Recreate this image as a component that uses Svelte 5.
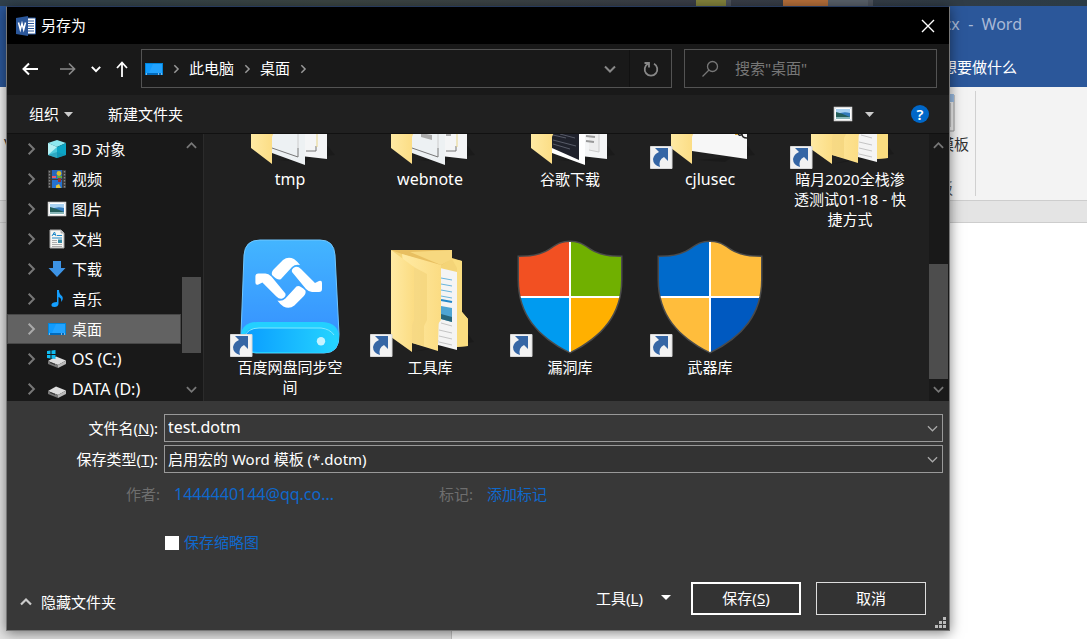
<script>
  const places = [
    { icon: 'cube', name: '3D 对象' },
    { icon: 'film', name: '视频' },
    { icon: 'picture', name: '图片' },
    { icon: 'doc', name: '文档' },
    { icon: 'down', name: '下载' },
    { icon: 'music', name: '音乐' },
    { icon: 'screen', name: '桌面' },
    { icon: 'osdrive', name: 'OS (C:)', latin: true },
    { icon: 'drive', name: 'DATA (D:)', latin: true }
  ];
  const files = [
    { icon: 'papers', name: 'tmp', latin: true },
    { icon: 'notes', name: 'webnote', latin: true },
    { icon: 'dark', name: '谷歌下载' },
    { icon: 'single', name: 'cjlusec', link: true, latin: true },
    { icon: 'folder', name: '暗月2020全栈渗透测试01-18 - 快捷方式', link: true },
    { icon: 'disk', name: '百度网盘同步空间', link: true },
    { icon: 'folder', name: '工具库', link: true },
    { icon: 'shield', name: '漏洞库', link: true, colors: ['#f25022', '#70b000', '#009bf0', '#ffb000'] },
    { icon: 'shield', name: '武器库', link: true, colors: ['#006acb', '#ffbd3c', '#ffbd3c', '#0059c0'] }
  ];
  let selected = $state('桌面');
  let filename = $state('test.dotm');
  let thumbnail = $state(false);
</script>

{#snippet chevron(dir, size, color, width)}
  <svg class="chev" width={size} height={size} viewBox="0 0 12 12" fill="none" stroke={color} stroke-width={width}>
    {#if dir === 'right'}<path d="M4 1.5 8.5 6 4 10.5" />
    {:else if dir === 'down'}<path d="M1 3.5 6 8.5 11 3.5" />
    {:else}<path d="M1 8.5 6 3.5 11 8.5" />{/if}
  </svg>
{/snippet}

{#snippet triangle(color, width)}
  <svg {width} height="5" viewBox="0 0 10 5" preserveAspectRatio="none"><path d="M0 0H10L5 5Z" fill={color} /></svg>
{/snippet}

{#snippet smallIcon(kind)}
  <svg width="20" height="20" viewBox="0 0 20 20">
    {#if kind === 'cube'}
      <path d="M10 1 19 4 10 8 1 4Z" fill="#8de8f0" /><path d="M1 4 10 8V19L1 16Z" fill="#4cc9dc" />
      <path d="M19 4 10 8V19L19 16Z" fill="#0ba4c4" /><path d="M1 4 10 8 1 16Z" fill="#b5f1f4" /><path d="M10 13 19 16 10 19 1 16Z" fill="#168eaf" opacity=".55" />
    {:else if kind === 'film'}
      <path d="M1 1H19V19H1Z" fill="#3c3c3c" /><path d="M2.500 2V19M17.500 2V19" stroke="#858585" stroke-width="1.400" stroke-dasharray="1.5 1.5" />
      <path d="M5 1H15V10H5Z" fill="#2867bd" /><path d="M5 11H15V19H5Z" fill="#2672ce" />
      <path d="M5 7H9V9H5Z" fill="#ef5864" /><circle cx="12" cy="4.500" r="2.400" fill="#d9bb2a" /><path d="M10 7H15V9H10Z" fill="#5eac3f" /><path d="M11 9H14V13H11Z" fill="#9e3131" /><path d="M9 19V16.500L12 15 14 19Z" fill="#e4c43a" />
    {:else if kind === 'picture'}
      <path d="M1.500 3.500H18.500V16.500H1.500Z" fill="#347bbd" stroke="#ddd" stroke-width="1.500" /><path d="M3 5H17V9Q9 7 3 11Z" fill="#a9d2f2" /><path d="M3 8Q8 9 17 13V15H3Z" fill="#245f5b" /><path d="M3 13 17 13V15H3Z" fill="#8bb8ba" /><path d="M2.500 4.500H17.500V15.500H2.500Z" stroke="white" fill="none" />
    {:else if kind === 'doc'}
      <path d="M3 1H14L17 4V19H3Z" fill="#f5f5f2" stroke="#aaa" /><path d="M14 1V4H17" fill="#ccc" stroke="#888" stroke-width=".6" />
      <path d="M5 7 7.500 3 9 7M6 5.500H8.500M10 6.500H15M5 9H15" fill="none" stroke="#2089c9" /><path d="M5 11.500H10M5 13.500H10M5 15.500H15M5 17.500H15" stroke="#999" stroke-width=".8" /><path d="M11 10.500H15V14H11Z" fill="#388ba6" />
    {:else if kind === 'down'}
      <path d="M6 2H14V9H18.500L10 18 1.500 9H6Z" fill="#3d94e6" />
    {:else if kind === 'music'}
      <path d="M10 1H12Q12 5 15 7Q17 10 14 13Q15 9 11.500 8V15Q11 18 7.500 18Q4 18 4.500 15.500Q5 13 10 13Z" fill="#149fff" />
    {:else if kind === 'screen'}
      <path d="M1 4H19V16H1Z" fill="#0086dc" /><path d="M2 5H18V14H2Z" fill="#119cff" /><path d="M9 5H18V14H5Z" fill="#35aaff" opacity=".5" /><path d="M2 15H18" stroke="#024f9c" /><path d="M2 15H3M14 15H15M17 15H18" stroke="white" />
    {:else}
      <path d="M1 12 9 7.500 19 11.500 11 16Z" fill="#dedede" /><path d="M1 12 11 16V19L1 15Z" fill="#777" /><path d="M11 16 19 11.500V15L11 19Z" fill="#b8b8b8" /><path d="M3 13.500 8 15.500" stroke="#333" />
      {#if kind === 'osdrive'}<path d="M0 2 3.500 1.500V5H0ZM4.500 1.400 8.500 1V5H4.500ZM0 6H3.500V9.500L0 9ZM4.500 6H8.500V10L4.500 9.600Z" fill="#10bcf2" />{/if}
    {/if}
  </svg>
{/snippet}

{#snippet bigIcon(f)}
  <svg class="big" width="120" height="120" viewBox="0 0 120 120">
    <defs>
      <linearGradient id="flap" x2="1"><stop stop-color="#ffeaa3" /><stop offset="1" stop-color="#fbdc83" /></linearGradient>
      <linearGradient id="disk" x2="0" y2="1"><stop stop-color="#43b5ff" /><stop offset="1" stop-color="#348cff" /></linearGradient>
      <linearGradient id="base" x2="1"><stop stop-color="#0a9cff" /><stop offset="1" stop-color="#25d4ff" /></linearGradient>
      <clipPath id="shield"><path d="M60 4C48 4 44 10 36 14C28 18 18 19 9 19V42C9 76 28 98 60 114C92 98 111 76 111 42V19C102 19 92 18 84 14C76 10 72 4 60 4Z" /></clipPath>
    </defs>
    {#if f.icon === 'folder'}
      <path d="M42 114 104 104 98 96 68 108Z" fill="#111" opacity=".35" />
      <path d="M21 12H82V20L92 23V74L98 81V108L84 109 40 90Z" fill="#f4d477" /><path d="M21 12H82V20L70 28 32 16Z" fill="#e8bf61" />
      <path d="M40 14 82 12V21L71 27Z" fill="#f7d87f" />
      <path d="M82 21 92 23V74L98 81V108L87 109V30Z" fill="#fadd80" />
      <path d="M70 30 87 34V112L68 107Z" fill="#f4f4f4" /><path d="M71 40 82 42M71 46 82 48M71 52 82 54M71 58 82 60" stroke="#69b5dc" />
      <path d="M71 62 82 64" stroke="#2488c8" stroke-width="2" /><path d="M71 68 82 70V84L71 81Z" fill="#4da5d3" /><path d="M71 76 82 79V84L71 81Z" fill="#27677c" />
      <path d="M71 85 82 88M69 92 82 95M69 98 82 101M69 104 82 107" stroke="#c4c4c4" />
      <path d="M32 16 71 27V82L68 86V113L42 105Z" fill="url(#flap)" /><path d="M42 28 57 36V82L54 88V108L42 105Z" fill="#f2d37a" opacity=".65" />
      <path d="M21 12 44 29V82L42 87V114L21 99Z" fill="url(#flap)" />
    {:else if f.icon === 'disk'}
      <path d="M30 2H90Q104 2 105 17L109 96Q110 115 94 115H26Q10 115 11 96L14 17Q15 2 30 2Z" fill="url(#disk)" stroke="#70c7ff" />
      <path d="M11 97Q12 84 28 84H93Q108 85 109 98Q109 115 94 115H26Q11 114 11 97Z" fill="#23d0ff" />
      <path d="M13 100Q16 90 29 90H91Q105 91 107 101Q107 114 93 114H27Q14 113 13 100Z" fill="url(#base)" /><path d="M14 99Q18 90 29 90H91Q100 91 104 97" fill="none" stroke="#81e7ff" />
      <circle cx="91" cy="103.300" r="4.200" fill="#c5f3ff" />
      {#each [0, 180] as turn}
        <g transform={`rotate(${turn} 58.7 44.7)`} fill="white">
          <path d="M42 37Q41 34 44 31L53 22Q58 18 64 21Q68 24 70 27Q65 26 62 29L51 41Q48 43 42 37Z" />
          <path d="M62 34Q61 31 65 29Q68 28 71 31L85 45 89 43Q92 42 92 45V51Q92 54 89 54H82Q79 54 76 51Z" />
        </g>
      {/each}
    {:else if f.icon === 'shield'}
      <path d="M60 4C48 4 44 10 36 14C28 18 18 19 9 19V42C9 76 28 98 60 114C92 98 111 76 111 42V19C102 19 92 18 84 14C76 10 72 4 60 4Z" stroke="#4b4b4b" stroke-width="3" />
      <g clip-path="url(#shield)">
        <path d="M0 0H60V59H0Z" fill={f.colors[0]} /><path d="M60 0H120V59H60Z" fill={f.colors[1]} />
        <path d="M0 59H60V120H0Z" fill={f.colors[2]} /><path d="M60 59H120V120H60Z" fill={f.colors[3]} />
        <path d="M60 0V120M0 59H120" stroke="white" stroke-width="2" />
      </g>
    {:else}
      <path d="M48 110 105 105 98 96 75 112Z" fill="#111" opacity=".35" />
      {#if f.icon === 'single'}
        <path d="M42 20H97V109L42 101Z" fill="#f7f7f7" /><path d="M88 83Q89 87 92 84Q92 88 97 88" fill="none" stroke="#222" stroke-width="1.500" /><path d="M85 84.500H88" stroke="#d4a53b" />
      {:else}
        <path d="M62 20H97V109L62 105Z" fill="#f4f5f6" />
        <path d="M42 20H75V115L42 103Z" fill={f.icon === 'dark' ? '#fff' : '#edf1f3'} />
        {#if f.icon === 'dark'}
          <path d="M42 20H69V110L42 98Z" fill="#20222c" /><path d="M43 85 56 88M43 90 66 96M43 94 60 99M50 84 65 88" stroke="#666977" stroke-width=".8" />
          <path d="M79 20H89V102L79 100" fill="#eee" stroke="#ccc" /><path d="M76 86 85 87M76 91 84 92" stroke="#999" stroke-width="2" />
        {:else}
          <path d="M42 98 68 107V98M76 101H86V96" fill="none" stroke="#777" /><path d="M68 84V98" stroke="#ccc" /><path d="M87 84V97" stroke="#e8d487" />
          {#if f.icon === 'notes'}<path d="M51 83 62 85V90L51 87Z" fill="#aaa" /><path d="M76 83H81V86H76Z" fill="#aaa" />{/if}
        {/if}
      {/if}
      <path d="M21 12 44 29V82L42 87V114L21 98Z" fill="url(#flap)" />
    {/if}
    {#if f.link}
      <path d="M.500 96.500H22V118.500H.500Z" fill="#f2f2f2" stroke="#d8d8d8" />
      <path d="M5 98H18V111L14 107Q8 110 10 117Q3 115 3 109Q4 104 9 102Z" fill="#3566a5" />
    {/if}
  </svg>
{/snippet}

<div class="desktop">
  <div class="word">
    <div class="strip"><i class="olive"></i><i class="slate"></i><i class="orange"></i><i class="gray"></i><i class="slate"></i></div>
    <div class="wordtitle">cx&nbsp; -&nbsp; Word</div>
    <div class="tabs">想要做什么</div>
    <div class="ribbon">
      <div class="sliver">V</div>
      <div class="group">
        <svg width="26" height="38" viewBox="0 0 26 38"><path d="M1 1H25V37H1Z" fill="#f5f5f5" stroke="#999" /><path d="M1 0H25V8H1Z" fill="#9dbfe6" /><path d="M5 9H21V33H5Z" fill="#fff" stroke="#999" /></svg>
        <span class="cmd">模板</span>
        <span class="grp">板</span>
      </div>
    </div>
    <div class="ruler"></div>
    <div class="canvas"><div class="sheet"></div></div>
  </div>

  <main class="dialog">
    <header>
      <svg width="20" height="20" viewBox="0 0 20 20"><path d="M10 2H19.500V18H10Z" fill="white" stroke="#2b579a" /><path d="M12 5H18M12 7.500H18M12 10H18M12 12.500H18M12 15H18" stroke="#2b579a" /><path d="M0 2 12 0V20L0 18Z" fill="#2b579a" /><path d="M2.500 6.500 4.300 13.500 6 7.500 7.700 13.500 9.500 6.500" fill="none" stroke="white" stroke-width="1.500" /></svg>
      <h1>另存为</h1>
      <button class="close" aria-label="关闭"><svg width="14" height="14" viewBox="0 0 14 14"><path d="M1 1 13 13M13 1 1 13" stroke="white" stroke-width="1.400" /></svg></button>
    </header>

    <nav class="address">
      <div class="arrows">
        <button aria-label="后退"><svg width="16" height="14" viewBox="0 0 16 14" fill="none" stroke="white" stroke-width="2"><path d="M16 7H2M7 1.500 1.500 7 7 12.500" /></svg></button>
        <button class="forward" aria-label="前进"><svg width="16" height="14" viewBox="0 0 16 14" fill="none" stroke="#888" stroke-width="1.700"><path d="M0 7H14M9 1.500 14.500 7 9 12.500" /></svg></button>
        <button aria-label="最近">{@render chevron('down', 10, '#fff', 2.4)}</button>
        <button aria-label="向上"><svg width="12" height="16" viewBox="0 0 12 16" fill="none" stroke="white" stroke-width="1.800"><path d="M6 16V2M1 7 6 1.500 11 7" /></svg></button>
      </div>
      <div class="path">
        {@render smallIcon('screen')}
        {@render chevron('right', 10, '#999', 1.8)}
        <button class="crumb">此电脑</button>
        {@render chevron('right', 10, '#999', 1.8)}
        <button class="crumb">桌面</button>
        {@render chevron('right', 10, '#999', 1.8)}
        <button class="drop" aria-label="历史">{@render chevron('down', 12, '#888', 2)}</button>
        <button class="refresh" aria-label="刷新"><svg width="16" height="16" viewBox="0 0 16 16" fill="none" stroke="#888" stroke-width="1.800"><path d="M11 2.800A6.300 6.300 0 1 1 5 2.800M1.500 2H6V6.500" /></svg></button>
      </div>
      <div class="search">
        <svg width="18" height="18" viewBox="0 0 18 18" fill="none" stroke="#777" stroke-width="1.300"><circle cx="11.500" cy="6.500" r="5" /><path d="M8 10 1.500 16.500" /></svg>
        <input type="search" aria-label="搜索" placeholder={'搜索"桌面"'} />
      </div>
    </nav>

    <div class="toolbar">
      <button>组织 {@render triangle('#ccc', 9)}</button>
      <button>新建文件夹</button>
      <span class="fill"></span>
      <button class="view" aria-label="视图">{@render smallIcon('picture')}{@render triangle('#ccc', 9)}</button>
      <button class="help" aria-label="帮助">?</button>
    </div>

    <div class="browser">
      <ul class="tree">
        {#each places as p}
          <li><button class:on={selected === p.name} onclick={() => (selected = p.name)}>
            {@render chevron('right', 14, selected === p.name ? '#aaa' : '#777', 1.7)}
            {@render smallIcon(p.icon)}<span class:latin={p.latin}>{p.name}</span>
          </button></li>
        {/each}
      </ul>
      <div class="scroll tree-scroll">{@render chevron('up', 11, '#777', 2)}<i></i>{@render chevron('down', 11, '#777', 2)}</div>
      <div class="files">
        <div class="grid">
          {#each files as f}
            <div class="file">{@render bigIcon(f)}<span class:latin={f.latin}>{f.name}</span></div>
          {/each}
        </div>
      </div>
      <div class="scroll file-scroll">{@render chevron('up', 11, '#777', 2)}<i></i>{@render chevron('down', 11, '#777', 2)}</div>
    </div>

    <section class="form">
      <div class="field">
        <label for="fname">文件名(<u>N</u>):</label>
        <div class="combo"><input id="fname" bind:value={filename} />{@render chevron('down', 11, '#aaa', 1.3)}</div>
      </div>
      <div class="field">
        <label for="ftype">保存类型(<u>T</u>):</label>
        <div class="combo shade"><select id="ftype"><option>启用宏的 Word 模板 (*.dotm)</option></select>{@render chevron('down', 11, '#aaa', 1.3)}</div>
      </div>
      <div class="meta">
        <span class="key">作者:</span><button class="link author">1444440144@qq.co...</button>
        <span class="tag">标记:</span><button class="link">添加标记</button>
      </div>
      <label class="thumb"><input type="checkbox" bind:checked={thumbnail} /><span>保存缩略图</span></label>
      <footer>
        <button class="hide">{@render chevron('up', 12, '#ccc', 2.2)}隐藏文件夹</button>
        <span class="fill"></span>
        <button class="tools"><span>工具(<u>L</u>)</span>{@render triangle('#fff', 10)}</button>
        <button class="push save"><span>保存(<u>S</u>)</span></button>
        <button class="push">取消</button>
      </footer>
    </section>
    <svg class="grip" width="11" height="11" viewBox="0 0 11 11" fill="#bbb"><path d="M8 0H11V3H8ZM4 4H7V7H4ZM8 4H11V7H8ZM0 8H3V11H0ZM4 8H7V11H4ZM8 8H11V11H8Z" /></svg>
  </main>
</div>

<style>
  :global(body) { overflow: hidden; background: #fff; }
  * { box-sizing: border-box; }
  .desktop { position: relative; min-height: 100vh; font: 15px/20px "Noto Sans", "Noto Sans CJK SC", sans-serif; color: #fff; overflow: hidden; }
  button, input, select { font: inherit; color: inherit; background: none; border: 0; padding: 0; margin: 0; border-radius: 0; }
  svg { flex: none; display: block; }
  button { white-space: nowrap; }

  .word { position: absolute; inset: 0; display: flex; flex-direction: column; }
  .strip { height: 6px; flex: none; display: flex; justify-content: flex-end; padding-right: 214px; background: linear-gradient(90deg, #30404c, #3c4643 30%, #3a3e48 65%, #2b3b45); }
  .strip i { width: 40px; background: #59616a; }
  .strip .olive { width: 30px; background: #83833c; }
  .strip .slate { width: 5px; background: #4e545d; }
  .strip .orange { width: 45px; margin-left: 52px; background: #b66f3a; }
  .wordtitle { flex: none; height: 38px; padding-right: 65px; background: #2b579a; color: #a9bad7; font-size: 16px; line-height: 36px; text-align: right; }
  .tabs { flex: none; height: 43px; padding-right: 70px; background: #2b579a; line-height: 46px; text-align: right; }
  .ribbon { flex: none; height: 113px; display: flex; justify-content: space-between; padding: 4px 111px 4px 4px; background: #f3f3f3; color: #333; }
  .sliver { padding-top: 42px; }
  .group { width: 130px; display: flex; flex-direction: column; align-items: flex-end; padding: 3px 6px 0 0; border-right: 1px solid #d0d0d0; }
  .group svg { margin-right: 14px; }
  .cmd { padding-top: 2px; }
  .grp { padding: 24px 16px 0 0; color: #555; }
  .ruler { flex: none; height: 23px; background: #e4e4e4; border: solid #cdcdcd; border-width: 1px 0; }
  .canvas { flex: 1; display: flex; padding-left: 451px; background: #e4e4e4; }
  .sheet { flex: 1; background: #fff; border-left: 1px solid #c6c6c6; }

  .dialog { position: relative; margin: 6px 137px 8px 6px; min-height: calc(100vh - 14px); display: flex; flex-direction: column; background: #383838; border: 1px solid #777; border-top-color: #26395b; box-shadow: 0 2px 12px rgb(0 0 0 / 50%); }
  header { height: 37px; display: flex; align-items: center; gap: 5px; padding: 0 14px 0 9px; background: #000; }
  h1 { flex: 1; margin: 0; padding-bottom: 2px; font-size: 15px; font-weight: 400; }
  .address { height: 51px; display: flex; align-items: center; gap: 10px; padding: 0 12px 2px 15px; background: #191919; }
  .arrows { width: 109px; display: flex; align-items: center; gap: 15px; }
  .forward { margin-left: 7px; }
  .path { flex: 1; height: 39px; display: flex; align-items: center; gap: 8px; padding-left: 2px; border: 1px solid #535353; }
  .path svg + :global(svg) { margin-left: -1px; }
  .crumb { padding-bottom: 2px; }
  .drop { margin-left: auto; padding-right: 5px; }
  .refresh { height: 37px; width: 42px; display: flex; justify-content: center; align-items: center; border-left: 1px solid #111; }
  .search { width: 253px; height: 39px; display: flex; align-items: center; gap: 16px; margin-left: 2px; padding: 0 16px; border: 1px solid #535353; }
  .search input { min-width: 0; flex: 1; padding-bottom: 2px; outline: 0; }
  .search input::placeholder { color: #777; opacity: 1; }
  .toolbar { height: 38px; display: flex; align-items: center; padding: 0 20px 0 22px; gap: 35px; background: #202020; }
  .toolbar button { display: flex; align-items: center; gap: 5px; }
  .fill { flex: 1; }
  .toolbar .view { gap: 12px; margin-right: 2px; }
  .toolbar .help { width: 18px; height: 18px; justify-content: center; border-radius: 50%; background: #0067c8; font-weight: 600; }

  .browser { flex: none; height: 268px; display: flex; border-top: 1px solid #111; background: #202020; overflow: hidden; }
  .tree { flex: none; width: 174px; margin: 0; padding: 0; list-style: none; background: #191919; }
  .tree button { width: 100%; height: 30px; display: flex; align-items: center; padding-left: 16px; border: 1px solid transparent; }
  .tree .on { background: #626262; border-color: #474747; }
  .tree svg + :global(svg) { margin-left: 9px; }
  .tree span { margin-left: 5px; }
  .latin { font-size: 16px; }
  .scroll { flex: none; display: flex; flex-direction: column; align-items: center; padding: 6px 1px 6px 0; background: #191919; }
  .scroll i { width: 19px; background: #4d4d4d; }
  .tree-scroll i { height: 76px; margin: 126px 0 auto; }
  .file-scroll i { height: 115px; margin: 113px 0 auto; }
  .tree-scroll { width: 22px; }
  .file-scroll { width: 20px; }
  .files { flex: 1; display: flex; align-items: flex-end; padding: 0 0 4px 16px; border-left: 1px solid #2b2b2b; overflow: hidden; }
  .grid { flex: 1; display: grid; grid-template-columns: repeat(auto-fill, 140px); row-gap: 9px; }
  .file { display: flex; flex-direction: column; align-items: center; text-align: center; }
  .big { margin-bottom: -1px; }
  .file span { width: 118px; word-break: break-all; }

  .form { flex: 1; display: flex; flex-direction: column; padding: 13px 6px 15px 0; }
  .field { display: flex; align-items: center; gap: 6px; margin-bottom: 3px; }
  .field label { width: 151px; text-align: right; }
  .combo { flex: 1; height: 28px; display: flex; align-items: center; padding-right: 4px; border: 1px solid #999; }
  .shade { background: #333; }
  .combo input, .combo select { flex: 1; min-width: 0; height: 26px; padding: 0 3px; appearance: none; outline: 0; }
  .combo input { font-size: 16px; padding-bottom: 2px; }
  .combo option { background: #333; }
  .meta { display: flex; align-items: center; padding-top: 8px; color: #6e6e6e; }
  .key { width: 153px; text-align: right; }
  .link { color: #0f68cc; }
  .author { width: 164px; margin: 0 101px 0 14px; text-align: left; font-size: 16px; }
  .tag { margin-right: 14px; }
  .thumb { display: flex; align-items: center; gap: 5px; align-self: flex-start; margin: 28px 0 auto 158px; color: #0f68cc; }
  .thumb span { padding-bottom: 2px; }
  .thumb input { width: 14px; height: 14px; appearance: none; background: #fff; }
  .thumb input:checked { background: #0f68cc; border: 2px solid #fff; }
  footer { display: flex; align-items: center; padding: 0 17px 0 13px; }
  .hide { display: flex; align-items: center; gap: 9px; padding-top: 6px; }
  .tools { display: flex; align-items: center; gap: 18px; margin-right: 20px; padding-bottom: 2px; }
  .push { width: 110px; height: 33px; padding-bottom: 2px; background: #333; border: 1px solid #ddd; }
  .save { border: 2px solid #fff; margin-right: 15px; }
  .grip { position: absolute; right: 3px; bottom: 2px; }
</style>
